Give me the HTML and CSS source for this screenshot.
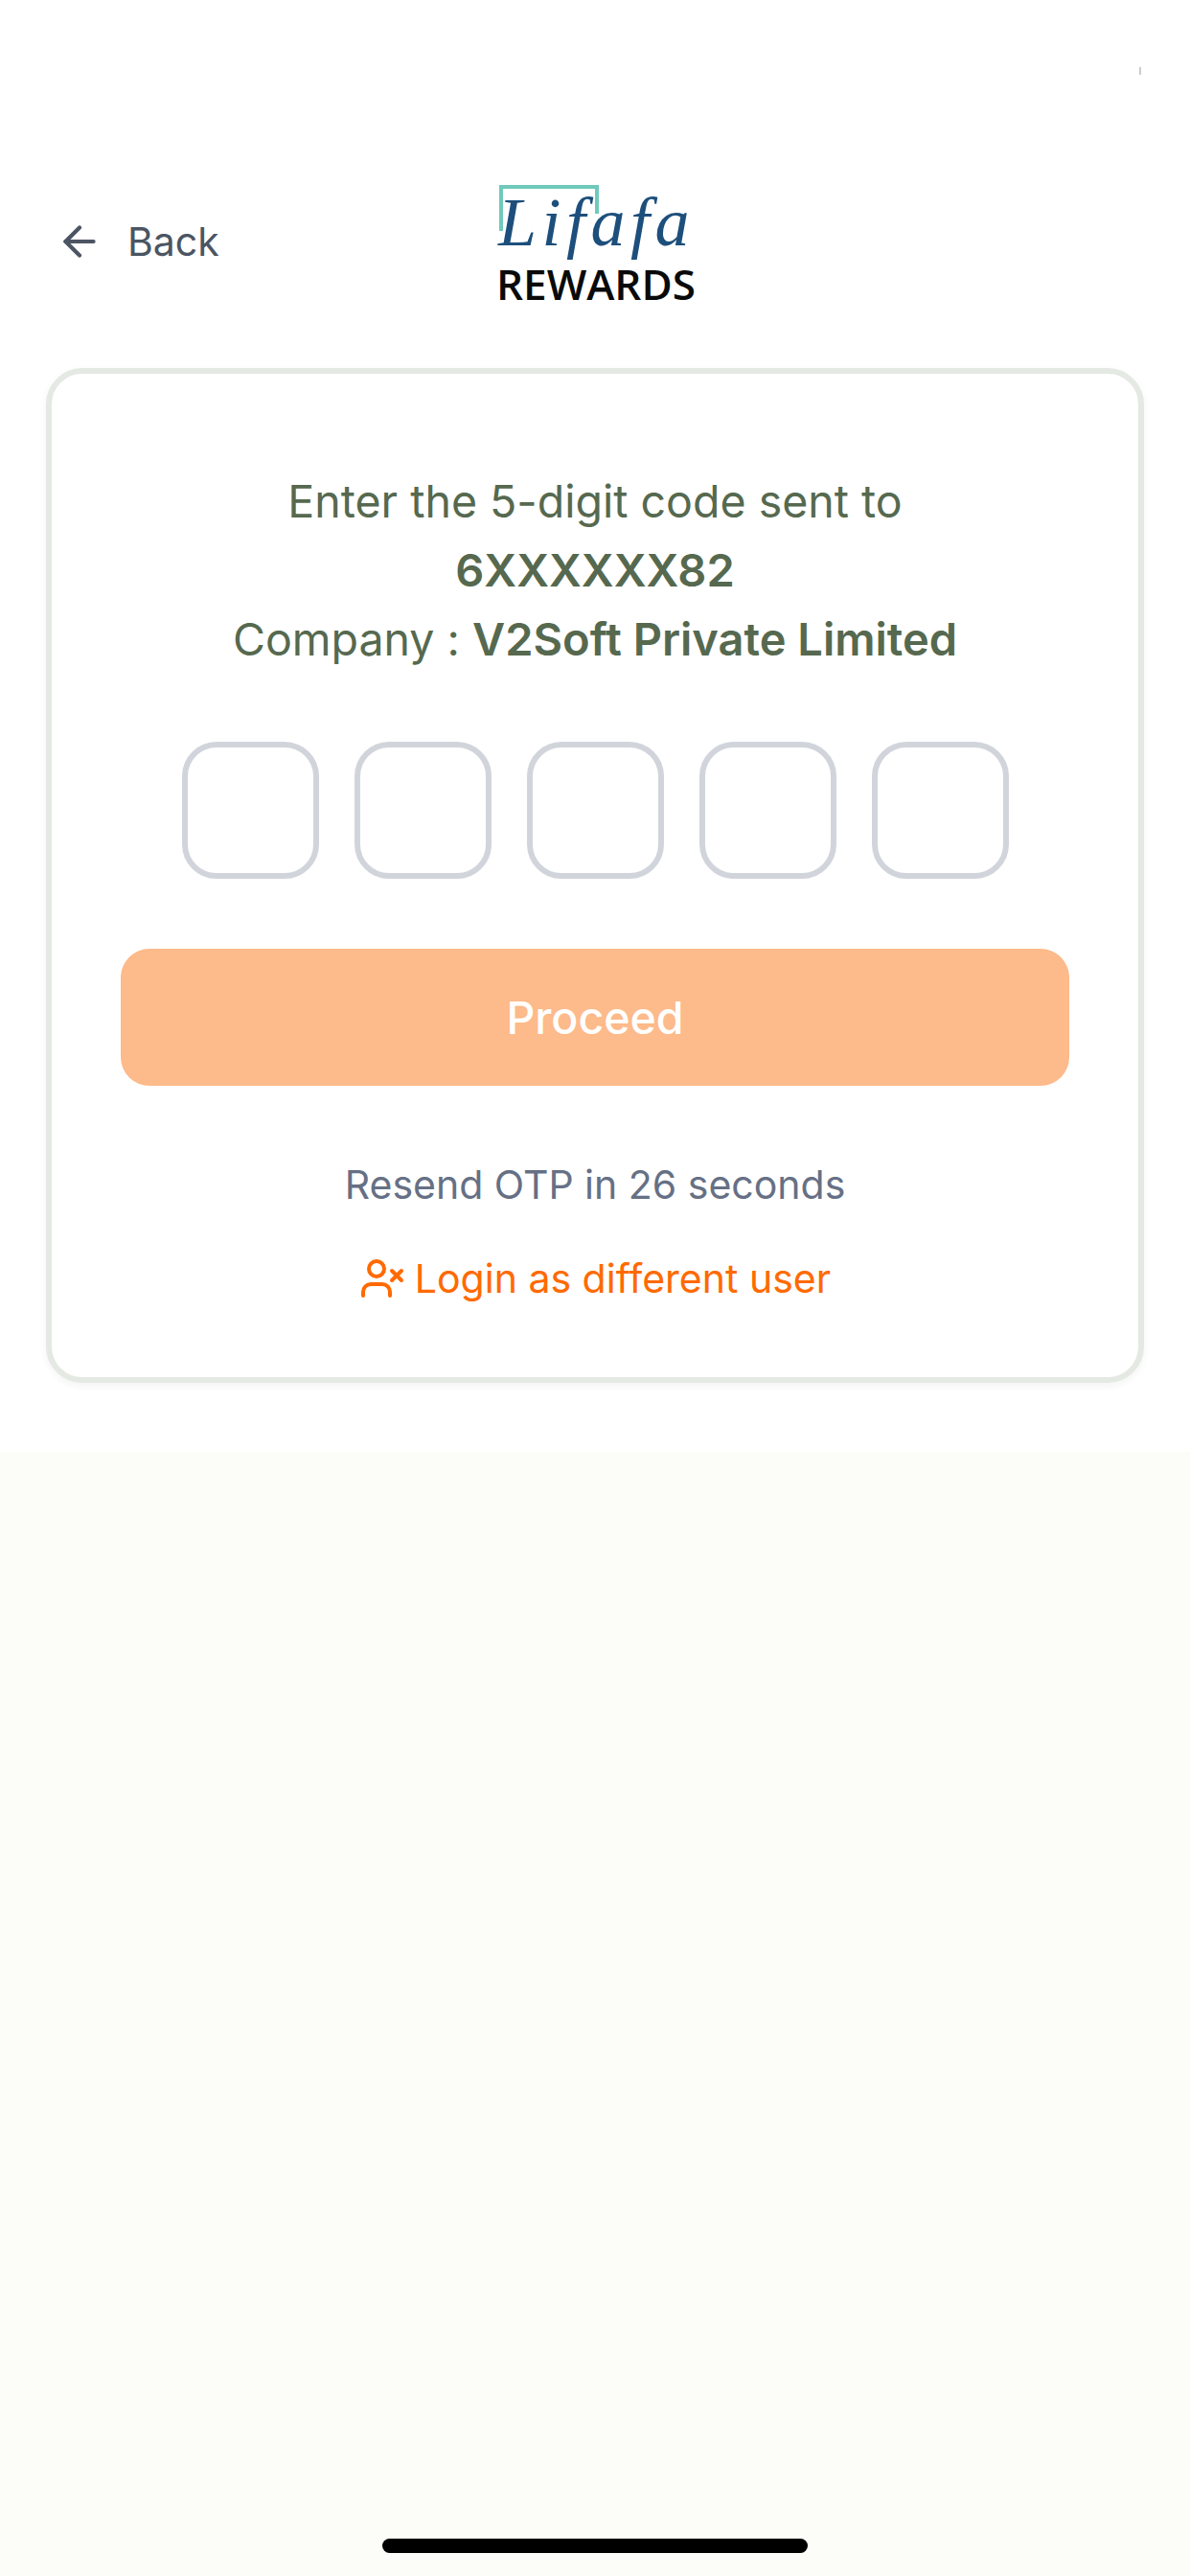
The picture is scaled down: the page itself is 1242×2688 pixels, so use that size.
FILE: index.html
```html
<!DOCTYPE html>
<html lang="en">
<head>
<meta charset="utf-8">
<title>Lifafa Rewards - Verify OTP</title>
<link rel="stylesheet" href="styles.css">
</head>
<body>
<div class="screen">
  <div class="top">
    <div class="status"><span class="status-tick"></span></div>
    <header class="header">
      <a class="back">
        <svg class="back-icon" viewBox="0 0 24 24" fill="none" stroke="currentColor" stroke-width="2" stroke-linecap="round" stroke-linejoin="round"><path d="M12 19l-7-7 7-7"/><path d="M19 12H5"/></svg>
        <span>Back</span>
      </a>
      <div class="logo">
        <div class="logo-mark">
          <svg class="logo-frame" viewBox="0 0 110 50" fill="none" stroke="#6fcabb" stroke-width="4"><path d="M2 48V2H102V30"/></svg>
          <span class="logo-script">Lifafa</span>
        </div>
        <div class="logo-word">REWARDS</div>
      </div>
    </header>
    <main class="card">
      <p class="intro">Enter the 5-digit code sent to</p>
      <p class="intro strong">6XXXXXX82</p>
      <p class="intro">Company : <b class="strong">V2Soft Private Limited</b></p>
      <div class="otp">
        <div class="otp-box"></div>
        <div class="otp-box"></div>
        <div class="otp-box"></div>
        <div class="otp-box"></div>
        <div class="otp-box"></div>
      </div>
      <button class="proceed">Proceed</button>
      <p class="resend">Resend OTP in 26 seconds</p>
      <a class="switch">
        <svg class="switch-icon" viewBox="0 0 24 24" fill="none" stroke="currentColor" stroke-width="2" stroke-linecap="round" stroke-linejoin="round"><path d="M16 21v-2a4 4 0 0 0-4-4H6a4 4 0 0 0-4 4v2"/><circle cx="9" cy="7" r="4"/><path d="M17 8l5 5"/><path d="M22 8l-5 5"/></svg>
        <span>Login as different user</span>
      </a>
    </main>
  </div>
  <div class="bottom"><div class="home-bar"></div></div>
</div>
</body>
</html>
```

FILE: styles.css
```css
* { box-sizing: border-box; margin: 0; padding: 0; }
html, body { width: 1242px; height: 2688px; overflow: hidden; }
body { background: #fff; font-family: Inter, "Noto Sans", sans-serif; }
.screen { display: flex; flex-direction: column; height: 2688px; }

.top { height: 1515px; background: #fff; padding: 0 48px; }
.status { height: 70px; display: flex; justify-content: flex-end; align-items: flex-end; padding-right: 3px; }
.status-tick { width: 2px; height: 8px; margin-bottom: -8px; background: #ccc; }

.header { height: 314px; padding-top: 122px; display: grid; grid-template-columns: 1fr auto 1fr; align-items: start; }
.back { display: flex; align-items: center; gap: 25px; color: #4b5563; font-size: 41px; padding: 35px 0 0 10px; }
.back-icon { width: 50px; height: 50px; }

.logo { width: 206px; }
.logo-mark { height: 80px; position: relative; }
.logo-frame { position: absolute; left: 3px; top: 1px; width: 110px; height: 50px; }
.logo-script { position: absolute; left: 2px; top: 0; font-family: "Liberation Serif", serif; font-style: italic; font-size: 72px; line-height: 80px; letter-spacing: 5.5px; color: #1d4f7c; white-space: nowrap; }
.logo-word { font-family: "Open Sans", sans-serif; font-weight: 600; font-size: 44px; line-height: 36px; color: #0a0a0a; text-align: center; white-space: nowrap; margin-top: 6px; }

.card { height: 1059px; border: 6px solid #e5e9e3; border-radius: 38px; background: #fff; box-shadow: 0 3px 8px rgba(0, 0, 0, 0.05); padding: 97px 72px 0; display: flex; flex-direction: column; align-items: stretch; text-align: center; }
.intro { font-size: 46.5px; line-height: 72px; color: #56694f; }
.strong { font-weight: 600; font-size: 47px; }
.otp { display: flex; justify-content: center; gap: 37px; margin-top: 71px; }
.otp-box { width: 143px; height: 143px; border: 6px solid #d1d5db; border-radius: 36px; background: #fff; }
.proceed { height: 143px; margin-top: 73px; border: 0; border-radius: 30px; background: #fdba8a; color: #fff; font-family: inherit; font-size: 46.5px; font-weight: 500; }
.resend { margin-top: 75px; font-size: 41px; line-height: 56px; color: #667085; }
.switch { display: flex; justify-content: center; align-items: center; gap: 10px; margin-top: 40px; font-size: 41px; line-height: 60px; color: #ff6a00; }
.switch-icon { width: 48px; height: 48px; }

.bottom { flex: 1; background: #fcfdf8; display: flex; justify-content: center; align-items: flex-end; padding-bottom: 24px; }
.home-bar { width: 444px; height: 15px; border-radius: 8px; background: #000; }
```
